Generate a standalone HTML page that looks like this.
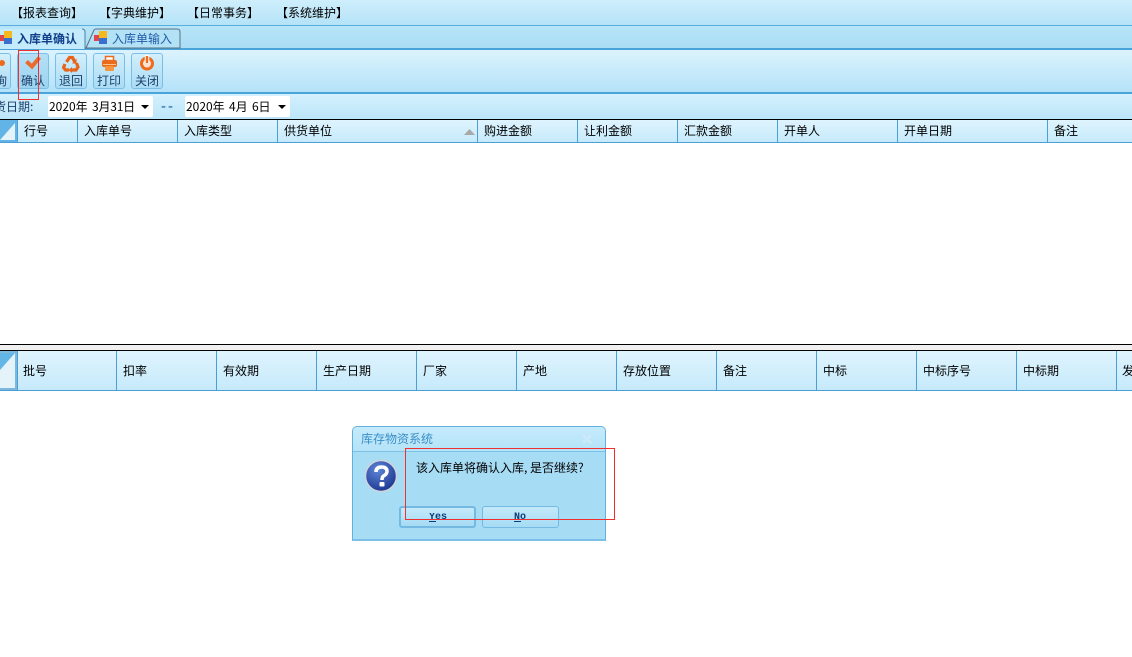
<!DOCTYPE html>
<html><head><meta charset="utf-8">
<style>
*{box-sizing:border-box;margin:0;padding:0}
html,body{width:1132px;height:657px;overflow:hidden;background:#fff}
body{position:relative;font:12px/14px "WenQuanYi Zen Hei","Noto Sans CJK SC","Liberation Sans",sans-serif;color:#000}
.a{position:absolute}
.t{position:absolute;white-space:nowrap;font-size:12px;line-height:14px}
.h{position:absolute;background:linear-gradient(#dff4fe,#c6eafb);border-right:1px solid #4a9fd8;height:100%;top:0}
.h span{position:absolute;left:6px;white-space:nowrap}
.btn{position:absolute;top:53px;width:32px;height:36px;border:1px solid #79bfe8;border-radius:3px;background:linear-gradient(#d3effc,#a9dcf5)}
.btn span{position:absolute;left:3px;top:20px;white-space:nowrap;color:#1c3f6a}
.btn svg{position:absolute;left:6px;top:1px}
.date{position:absolute;top:96px;height:21px;background:#fff;border-radius:2px}
.date b{position:absolute;top:4px;font-weight:normal;font-size:12px;line-height:14px;white-space:nowrap}
.arr{position:absolute;top:9px;width:0;height:0;border:4px solid transparent;border-top:4px solid #000;border-bottom:0}
.k{font-family:'Liberation Mono',monospace;font-size:10px;font-weight:bold;color:#0d3c7a;line-height:10px}
</style></head><body>

<!-- menu -->
<div class="a" style="left:0;top:0;width:1132px;height:26px;background:linear-gradient(#cfeefc,#b5e3f8);border-bottom:1px solid #5aaede"></div>
<div class="t" style="left:11px;top:6px">【报表查询】</div>
<div class="t" style="left:99px;top:6px">【字典维护】</div>
<div class="t" style="left:187px;top:6px">【日常事务】</div>
<div class="t" style="left:276px;top:6px">【系统维护】</div>

<!-- tabs strip -->
<div class="a" style="left:0;top:26px;width:1132px;height:24px;background:linear-gradient(#b7e4f8,#a9ddf5);border-bottom:2px solid #4aa3d9"></div>
<svg class="a" style="left:0;top:28px" width="182" height="22">
<path d="M-2 21V1H82Q85 1 85 4V6L85 21Z" fill="#c4ebfb"/>
<path d="M85 21V4Q85 1 82 1" fill="none" stroke="#4a7fa8"/>
<path d="M86 20L94 2Q94.500 1 96 1H177Q180 1 180 4V20H86Z" fill="#b3e2f7" stroke="#5b7080"/>
<rect x="0" y="7" width="5" height="6" fill="#e0454a"/>
<rect x="4" y="3" width="8" height="7" fill="#f5b91e"/>
<rect x="4" y="10" width="8" height="6" fill="#3a6fd0"/>
<rect x="94" y="7" width="5" height="6" fill="#e0454a"/>
<rect x="99" y="3" width="8" height="7" fill="#f5b91e"/>
<rect x="99" y="10" width="8" height="6" fill="#3a6fd0"/>
</svg>
<div class="t" style="left:17px;top:32px;color:#123f8c;font-weight:bold">入库单确认</div>
<div class="t" style="left:112px;top:32px;color:#1f5aa5">入库单输入</div>

<!-- toolbar -->
<div class="a" style="left:0;top:50px;width:1132px;height:44px;background:linear-gradient(#dcf3fe,#b4e2f8);border-bottom:2px solid #4aa3d9"></div>

<div class="btn" style="left:-22px;width:33px"><span style="left:16px">询</span>
<svg style="left:21px;top:6px" width="10" height="8"><circle cx="2" cy="3" r="3" fill="#ec6a1c"/></svg></div>

<div class="btn" style="left:17px;background:linear-gradient(#b5e0f6,#9cd4f0)"><span>确认</span>
<svg width="20" height="20" viewBox="0 0 20 20"><path d="M2.500 6.500L8 11.500L15.500 2.500" fill="none" stroke="#ec6a2c" stroke-width="4"/></svg></div>

<div class="btn" style="left:55px"><span>退回</span>
<svg width="20" height="20" viewBox="0 0 20 20" fill="none" stroke="#e8641a" stroke-width="3.200"><path d="M4.500 7L7.500 2.500H10.500L12.500 6.500"/><path d="M14.500 8L16 12L14 15H10"/><path d="M3 9L1.500 12.500L3.500 15H7"/><path d="M14.500 3.500V8.500H10Z" fill="#e8641a" stroke="none"/><path d="M10 12V18L6.500 15Z" fill="#e8641a" stroke="none"/></svg></div>

<div class="btn" style="left:93px"><span>打印</span>
<svg width="20" height="20" viewBox="0 0 20 20"><rect x="5.500" y="1.500" width="8" height="4" fill="#fff" stroke="#ea6a1e" stroke-width="1.500"/><rect x="2" y="5" width="15" height="7" rx="2" fill="#ea6a1e"/><rect x="3" y="9" width="13" height="1" fill="#fbc48e"/><rect x="5" y="11" width="9" height="5" rx="1" fill="#f6953f"/></svg></div>

<div class="btn" style="left:131px"><span>关闭</span>
<svg width="20" height="20" viewBox="0 0 20 20" fill="none"><circle cx="9" cy="8.500" r="5.500" fill="#fbe3d2" stroke="#ef6b1f" stroke-width="3"/><path d="M9 0V8" stroke="#fff" stroke-width="4.500"/><path d="M9 1V8" stroke="#ef6b1f" stroke-width="2.500"/></svg></div>

<!-- date bar -->
<div class="a" style="left:0;top:94px;width:1132px;height:25px;background:linear-gradient(#d3f0fd,#bce6f9)"></div>
<div class="t" style="left:-6px;top:100px;color:#1c3f6a">货日期:</div>
<div class="date" style="left:48px;width:105px"><b style="left:1px">2020年</b><b style="left:44px;letter-spacing:-.2px">3月31日</b><i class="arr" style="left:93px"></i></div>
<div class="t" style="left:161px;top:100px;color:#1f5aa5;font:15px/14px 'Liberation Sans',sans-serif;letter-spacing:2px">--</div>
<div class="date" style="left:185px;width:105px"><b style="left:1px">2020年</b><b style="left:44px">4月</b><b style="left:67px;letter-spacing:-.2px">6日</b><i class="arr" style="left:93px"></i></div>

<!-- upper grid header -->
<div class="a" style="left:0;top:119px;width:1132px;height:1px;background:#000"></div>
<div class="a" style="left:0;top:120px;width:1132px;height:23px;border-bottom:1px solid #4a9fd8;background:#cfeefc;overflow:hidden">
<svg class="a" style="left:0;top:0" width="17" height="22"><rect width="17" height="22" fill="#62b3e6"/><path d="M15 3V20H0Z" fill="#e4f2f9"/></svg>
<div class="h" style="left:17px;width:61px;border-left:1px solid #4a9fd8"><span style="top:4px">行号</span></div>
<div class="h" style="left:78px;width:100px"><span style="top:4px">入库单号</span></div>
<div class="h" style="left:178px;width:100px"><span style="top:4px">入库类型</span></div>
<div class="h" style="left:278px;width:200px"><span style="top:4px">供货单位</span>
<svg class="a" style="left:186px;top:9px" width="11" height="6"><path d="M0 6L5.500 0L11 6Z" fill="#a8a8a8"/></svg></div>
<div class="h" style="left:478px;width:100px"><span style="top:4px">购进金额</span></div>
<div class="h" style="left:578px;width:100px"><span style="top:4px">让利金额</span></div>
<div class="h" style="left:678px;width:100px"><span style="top:4px">汇款金额</span></div>
<div class="h" style="left:778px;width:120px"><span style="top:4px">开单人</span></div>
<div class="h" style="left:898px;width:150px"><span style="top:4px">开单日期</span></div>
<div class="h" style="left:1048px;width:84px;border-right:0"><span style="top:4px">备注</span></div>
</div>

<!-- splitter -->
<div class="a" style="left:0;top:344px;width:1132px;height:7px;background:#f0f0f0;border-top:1px solid #000;border-bottom:1px solid #000"></div>

<!-- lower grid header -->
<div class="a" style="left:0;top:351px;width:1132px;height:40px;border-bottom:1px solid #4a9fd8;background:#cfeefc;overflow:hidden">
<svg class="a" style="left:0;top:0" width="17" height="39"><rect width="17" height="39" fill="#7db8dc"/><rect y="2" width="15" height="35" fill="#e4f2f9"/><path d="M0 2H15L0 19Z" fill="#62b6e6"/></svg>
<div class="h" style="left:17px;width:100px;border-left:1px solid #4a9fd8"><span style="left:5px;top:13px">批号</span></div>
<div class="h" style="left:117px;width:100px"><span style="top:13px">扣率</span></div>
<div class="h" style="left:217px;width:100px"><span style="top:13px">有效期</span></div>
<div class="h" style="left:317px;width:100px"><span style="top:13px">生产日期</span></div>
<div class="h" style="left:417px;width:100px"><span style="top:13px">厂家</span></div>
<div class="h" style="left:517px;width:100px"><span style="top:13px">产地</span></div>
<div class="h" style="left:617px;width:100px"><span style="top:13px">存放位置</span></div>
<div class="h" style="left:717px;width:100px"><span style="top:13px">备注</span></div>
<div class="h" style="left:817px;width:100px"><span style="top:13px">中标</span></div>
<div class="h" style="left:917px;width:100px"><span style="top:13px">中标序号</span></div>
<div class="h" style="left:1017px;width:100px"><span style="top:13px">中标期</span></div>
<div class="h" style="left:1117px;width:60px;border-right:0"><span style="left:5px;top:13px">发票</span></div>
</div>

<!-- dialog -->
<div class="a" style="left:352px;top:426px;width:254px;height:115px;background:#a7dcf5;border:1px solid #62b0de;border-bottom:2px solid #7cc0e8;border-radius:5px 5px 0 0"></div>
<div class="a" style="left:353px;top:427px;width:252px;height:25px;background:linear-gradient(#c5ebfc,#b5e3f8);border-bottom:1px solid #7cc2e8;border-radius:4px 4px 0 0"></div>
<div class="t" style="left:361px;top:432px;color:#3c8fc8">库存物资系统</div>
<svg class="a" style="left:581px;top:433px" width="12" height="12"><path d="M2 2L10 10M10 2L2 10" stroke="#cbe9f8" stroke-width="3"/></svg>
<svg class="a" style="left:364px;top:459px" width="34" height="34" viewBox="0 0 34 34">
<defs><radialGradient id="g" cx=".4" cy=".3" r=".8"><stop offset="0" stop-color="#5f86d8"/><stop offset="1" stop-color="#142f88"/></radialGradient></defs>
<circle cx="17" cy="17" r="15.500" fill="url(#g)" stroke="#d0d4da" stroke-width="1.500"/>
<path d="M12 13Q12 8 17.500 8Q23 8 23 12.500Q23 15 19.500 17Q18 18 18 21" fill="none" stroke="#fff" stroke-width="3.500"/>
<rect x="15.500" y="23" width="5" height="4.500" rx="1" fill="#fff"/>
</svg>
<div class="t" style="left:416px;top:461px">该入库单将确认入库, 是否继续?</div>
<div class="a" style="left:399px;top:506px;width:77px;height:22px;background:linear-gradient(#c4eafb,#a5dbf4);border:2px solid #74b9e2;border-radius:3px"></div>
<div class="a" style="left:482px;top:506px;width:77px;height:22px;background:linear-gradient(#c4eafb,#a5dbf4);border:1px solid #74b9e2;border-radius:3px"></div>
<div class="t k" style="left:429px;top:513px;height:6px;overflow:hidden">Yes</div>
<div class="a" style="left:429px;top:521px;width:7px;height:1px;background:#0d3c7a"></div>
<div class="t k" style="left:514px;top:513px">No</div>
<div class="a" style="left:514px;top:521px;width:7px;height:1px;background:#0d3c7a"></div>

<!-- red annotations -->
<div class="a" style="left:18px;top:50px;width:21px;height:50px;border:1px solid #f03030"></div>
<div class="a" style="left:405px;top:448px;width:210px;height:72px;border:1px solid #f03030"></div>
</body></html>
